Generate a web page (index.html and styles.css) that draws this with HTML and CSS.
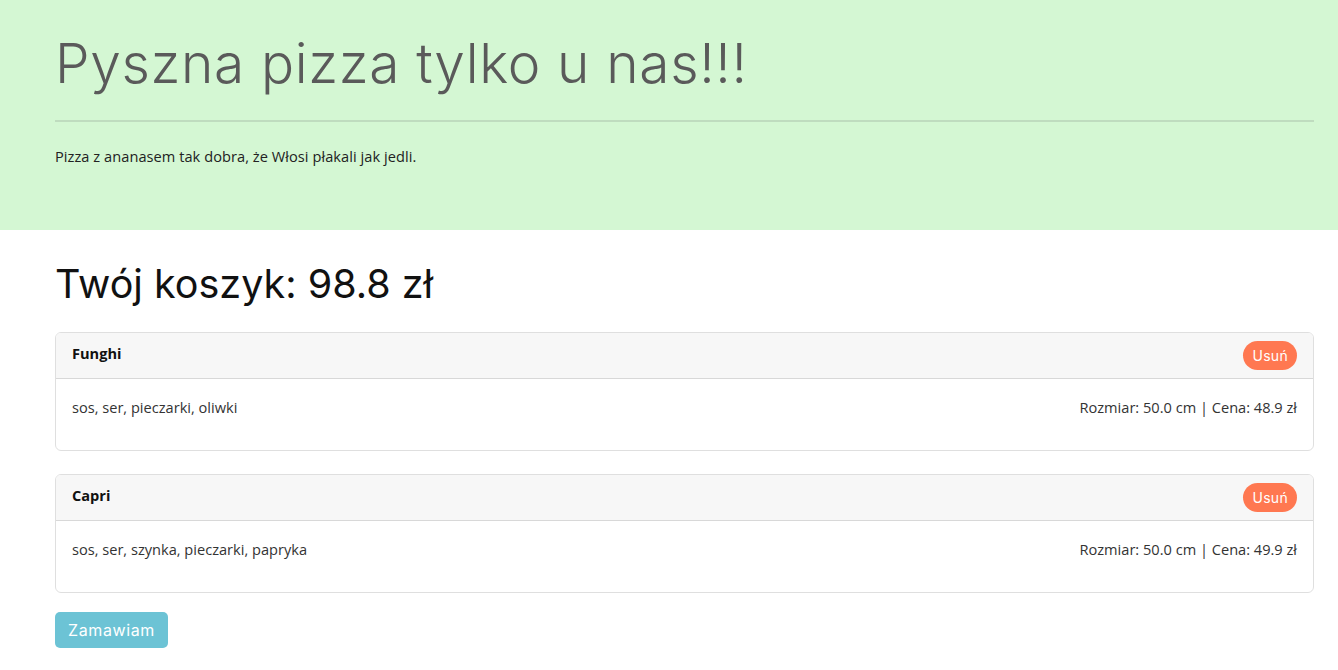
FILE: index.html
```html
<!DOCTYPE html>
<html lang="pl">
<head>
<meta charset="utf-8">
<title>Pizza</title>
<link rel="stylesheet" href="styles.css">
</head>
<body>
<header class="jumbo">
  <h1 class="display">Pyszna pizza tylko u nas!!!</h1>
  <hr class="rule">
  <p class="lead">Pizza z ananasem tak dobra, że Włosi płakali jak jedli.</p>
</header>
<main class="content">
  <h2 class="cart-title">Twój koszyk: 98.8 zł</h2>
  <section class="card">
    <div class="card-header">
      <span class="pizza-name">Funghi</span>
      <span class="badge">Usuń</span>
    </div>
    <div class="card-body">
      <p class="row"><span>sos, ser, pieczarki, oliwki</span><span>Rozmiar: 50.0 cm | Cena: 48.9 zł</span></p>
    </div>
  </section>
  <section class="card">
    <div class="card-header">
      <span class="pizza-name">Capri</span>
      <span class="badge">Usuń</span>
    </div>
    <div class="card-body">
      <p class="row"><span>sos, ser, szynka, pieczarki, papryka</span><span>Rozmiar: 50.0 cm | Cena: 49.9 zł</span></p>
    </div>
  </section>
  <button class="btn-order">Zamawiam</button>
</main>
</body>
</html>
```
FILE: styles.css
```css
* { box-sizing: border-box; }
html, body { margin: 0; padding: 0; }
body {
  font-family: "Open Sans", "Noto Sans", sans-serif;
  font-size: 14.6px;
  line-height: 1.5;
  color: #333;
  background: #fff;
}
.jumbo {
  background: #d4f7d3;
  padding: 30px 24px 0 55px;
  height: 230px;
}
.display {
  margin: 0;
  font-family: Inter, "DejaVu Sans", sans-serif;
  font-weight: 300;
  font-size: 55px;
  letter-spacing: 0.65px;
  line-height: 1.2;
  color: #5a5a5a;
}
.rule {
  border: 0;
  border-top: 2px solid #bfdcbf;
  margin: 24px 0 24px;
}
.lead {
  margin: 0;
  color: #222;
  letter-spacing: 0.05px;
}
.content {
  padding: 30px 24px 20px 55px;
}
.cart-title {
  margin: 0 0 24px;
  font-family: Inter, "DejaVu Sans", sans-serif;
  font-weight: 400;
  font-size: 39.5px;
  line-height: 48px;
  color: #111;
}
.card {
  border: 1px solid rgba(0,0,0,0.125);
  border-radius: 6px;
  margin-bottom: 23px;
  overflow: hidden;
}
.card-header {
  display: flex;
  justify-content: space-between;
  align-items: center;
  padding: 8px 16px;
  background: #f7f7f7;
  border-bottom: 1px solid rgba(0,0,0,0.125);
}
.pizza-name {
  font-weight: 700;
  color: #111;
  margin-top: -3px;
}
.badge {
  display: inline-flex;
  align-items: center;
  height: 29px;
  padding: 0 9px;
  border-radius: 15px;
  background: #ff7851;
  color: #fff;
  font-family: Inter, "DejaVu Sans", sans-serif;
  font-size: 14px;
  letter-spacing: 0.3px;
}
.card-body {
  padding: 17px 16px 16px;
}
.row {
  display: flex;
  justify-content: space-between;
  line-height: 22px;
  margin: 0 0 16px;
}
.btn-order {
  display: block;
  margin-top: -4px;
  height: 36px;
  width: 113px;
  border: 0;
  border-radius: 5px;
  background: #6cc3d5;
  color: #fff;
  font-family: Inter, "DejaVu Sans", sans-serif;
  font-size: 16px;
  letter-spacing: 0.6px;
  padding: 0;
}
```
